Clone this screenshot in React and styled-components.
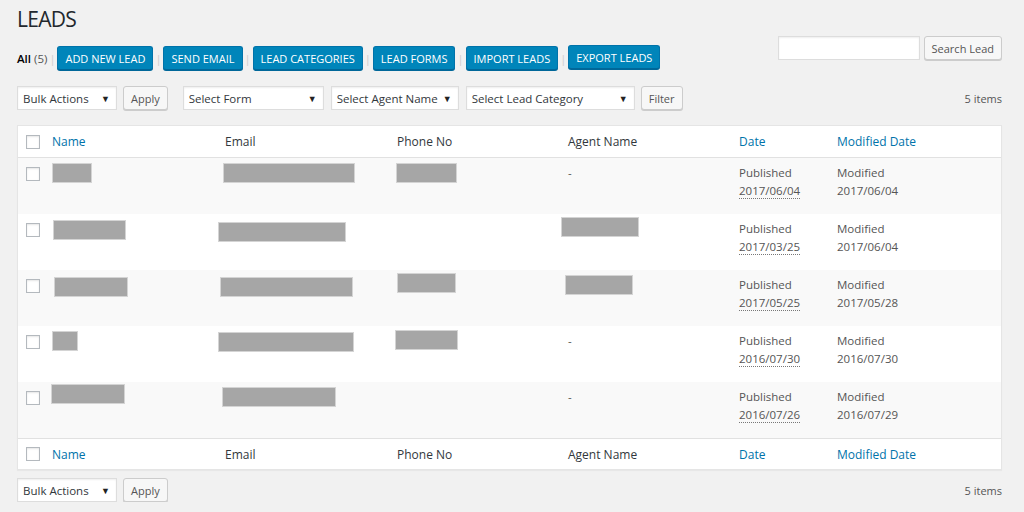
import React from 'react'
import styled, { createGlobalStyle } from 'styled-components'

const GlobalStyle = createGlobalStyle`
    body {
        margin: 0;
        background: #f1f1f1;
        font-family: "Open Sans", "Noto Sans", sans-serif;
        font-size: 12px;
        color: #444;
    }
    button {
        white-space: nowrap;
        flex-shrink: 0;
    }
`;

const Wrap = styled.div`
    padding: 0 22px 0 17px;
`;

const Title = styled.h1`
    margin: 0;
    padding-top: 5px;
    font-size: 21px;
    line-height: 29px;
    font-weight: 400;
    color: #23282d;
    letter-spacing: -0.7px;
`;

const TopBar = styled.div`
    display: flex;
    justify-content: space-between;
    align-items: flex-start;
`;

const SubList = styled.div`
    display: flex;
    align-items: center;
    margin-top: 12px;
    white-space: nowrap;
`;

const AllLink = styled.span`
    font-weight: 600;
    color: #000;
    font-size: 11.5px;
    span {
        font-weight: 400;
        color: #555;
    }
`;

const Sep = styled.span`
    color: #ccc;
    margin: 0 2px;
    font-size: 11px;
`;

const PrimaryButton = styled.button`
    height: 24px;
    padding: 0 7px;
    background: #0085ba;
    border: 1px solid #0073aa;
    border-bottom-color: #006799;
    box-shadow: 0 1px 0 #006799;
    border-radius: 3px;
    color: #fff;
    font-family: inherit;
    font-size: 11px;
    text-transform: uppercase;
    cursor: pointer;
    margin-top: ${({ $up }) => $up ? '-2px' : '0'};
`;

const SearchBox = styled.div`
    display: flex;
    gap: 4px;
    margin-top: 2px;
`;

const TextInput = styled.input`
    width: 142px;
    height: 24px;
    box-sizing: border-box;
    border: 1px solid #ddd;
    box-shadow: inset 0 1px 2px rgba(0, 0, 0, 0.07);
    background: #fff;
`;

const SecondaryButton = styled.button`
    height: 24px;
    padding: 0 7px;
    background: #f7f7f7;
    border: 1px solid #ccc;
    box-shadow: 0 1px 0 #ccc;
    border-radius: 3px;
    color: #555;
    font-family: inherit;
    font-size: 11px;
    cursor: pointer;
`;

const TableNav = styled.div`
    display: flex;
    align-items: center;
    margin-top: ${({ $top }) => $top}px;
    height: 24px;
`;

const Select = styled.div`
    width: ${({ $w }) => $w}px;
    height: 24px;
    flex-shrink: 0;
    box-sizing: border-box;
    display: flex;
    align-items: center;
    justify-content: space-between;
    padding: 0 6px 0 5px;
    margin-right: ${({ $mr }) => $mr}px;
    background: #fff;
    border: 1px solid #ddd;
    box-shadow: inset 0 1px 2px rgba(0, 0, 0, 0.07);
    color: #32373c;
    font-size: 11.5px;
    white-space: nowrap;
    &::after {
        content: "▼";
        font-size: 9px;
        color: #222;
    }
`;

const Count = styled.div`
    margin-left: auto;
    color: #555;
    font-size: 11px;
`;

const Table = styled.div`
    margin-top: 15px;
    background: #fff;
    border: 1px solid #e5e5e5;
    box-shadow: 0 1px 1px rgba(0, 0, 0, 0.04);
`;

const Row = styled.div`
    display: grid;
    grid-template-columns: 24px 173px 172px 171px 171px 98px 1fr;
    height: ${({ $h }) => $h}px;
    background: ${({ $striped }) => $striped ? '#f9f9f9' : '#fff'};
    border-bottom: ${({ $line }) => $line ? '1px solid #e1e1e1' : 'none'};
    border-top: ${({ $topLine }) => $topLine ? '1px solid #e1e1e1' : 'none'};
    box-sizing: border-box;
`;

const CheckCell = styled.div`
    padding: ${({ $pad }) => $pad}px 0 0 8px;
`;

const Checkbox = styled.div`
    width: 14px;
    height: 14px;
    box-sizing: border-box;
    border: 1px solid #b4b9be;
    background: #fff;
    box-shadow: inset 0 1px 2px rgba(0, 0, 0, 0.1);
`;

const HeadCell = styled.div`
    padding-left: 10px;
    display: flex;
    align-items: center;
    color: ${({ $link }) => $link ? '#0073aa' : '#32373c'};
    font-size: 12px;
`;

const Cell = styled.div`
    padding: 6px 10px 0;
    line-height: 18px;
    color: #555;
    font-size: 11.5px;
`;

const Redact = styled.div`
    width: ${({ $w }) => $w}px;
    height: 18px;
    margin-left: ${({ $dx }) => $dx || 0}px;
    margin-top: ${({ $dy }) => $dy || 0}px;
    background: #a6a6a6;
    box-shadow: 0 0 0 1px #d4d4d4;
`;

const DateAbbr = styled.span`
    border-bottom: 1px dotted #777;
`;

const rows = [
    { name: [1, 0, 38], email: [-1, 0, 130], phone: [0, 0, 59], agent: null, pub: '2017/06/04', mod: '2017/06/04' },
    { name: [2, 1, 71], email: [-6, 3, 126], phone: null, agent: [-6, -2, 76], pub: '2017/03/25', mod: '2017/06/04' },
    { name: [3, 2, 72], email: [-4, 2, 131], phone: [1, -2, 57], agent: [-2, 0, 66], pub: '2017/05/25', mod: '2017/05/28' },
    { name: [1, 0, 24], email: [-6, 1, 134], phone: [-1, -1, 61], agent: null, pub: '2016/07/30', mod: '2016/07/30' },
    { name: [0, -3, 72], email: [-2, 0, 112], phone: null, agent: null, pub: '2016/07/26', mod: '2016/07/29' },
];

const Block = ({ r }) => r ? <Redact $dx={r[0]} $dy={r[1]} $w={r[2]} /> : null;

const HeaderRow = ({ footer }) => (
    <Row $h={footer ? 31 : 32} $line={!footer} $topLine={footer}>
        <CheckCell $pad={footer ? 8 : 9}><Checkbox /></CheckCell>
        <HeadCell $link>Name</HeadCell>
        <HeadCell>Email</HeadCell>
        <HeadCell>Phone No</HeadCell>
        <HeadCell>Agent Name</HeadCell>
        <HeadCell $link>Date</HeadCell>
        <HeadCell $link>Modified Date</HeadCell>
    </Row>
);

const BulkNav = ({ top, filters }) => (
    <TableNav $top={top}>
        <Select $w={100} $mr={6}>Bulk Actions</Select>
        <SecondaryButton style={{ marginRight: filters ? 15 : 0 }}>Apply</SecondaryButton>
        {filters && (
            <>
                <Select $w={141} $mr={7}>Select Form</Select>
                <Select $w={128} $mr={7}>Select Agent Name</Select>
                <Select $w={169} $mr={6}>Select Lead Category</Select>
                <SecondaryButton>Filter</SecondaryButton>
            </>
        )}
        <Count>5 items</Count>
    </TableNav>
);

const App = () => {
    return (
        <Wrap>
            <GlobalStyle />
            <Title>LEADS</Title>
            <TopBar>
                <SubList>
                    <AllLink>All <span>(5)</span></AllLink>
                    <Sep>|</Sep>
                    <PrimaryButton>Add New Lead</PrimaryButton>
                    <Sep>|</Sep>
                    <PrimaryButton>Send Email</PrimaryButton>
                    <Sep>|</Sep>
                    <PrimaryButton>Lead Categories</PrimaryButton>
                    <Sep>|</Sep>
                    <PrimaryButton>Lead Forms</PrimaryButton>
                    <Sep>|</Sep>
                    <PrimaryButton>Import Leads</PrimaryButton>
                    <Sep>|</Sep>
                    <PrimaryButton $up>Export Leads</PrimaryButton>
                </SubList>
                <SearchBox>
                    <TextInput type="text" />
                    <SecondaryButton>Search Lead</SecondaryButton>
                </SearchBox>
            </TopBar>
            <BulkNav top={16} filters />
            <Table>
                <HeaderRow />
                {rows.map((r, i) => (
                    <Row key={i} $h={56} $striped={i % 2 === 0}>
                        <CheckCell $pad={9}><Checkbox /></CheckCell>
                        <Cell><Block r={r.name} /></Cell>
                        <Cell><Block r={r.email} /></Cell>
                        <Cell><Block r={r.phone} /></Cell>
                        <Cell>{r.agent ? <Block r={r.agent} /> : '-'}</Cell>
                        <Cell>Published<br /><DateAbbr>{r.pub}</DateAbbr></Cell>
                        <Cell>Modified<br />{r.mod}</Cell>
                    </Row>
                ))}
                <HeaderRow footer />
            </Table>
            <BulkNav top={8} />
        </Wrap>
    )
}

export default App
